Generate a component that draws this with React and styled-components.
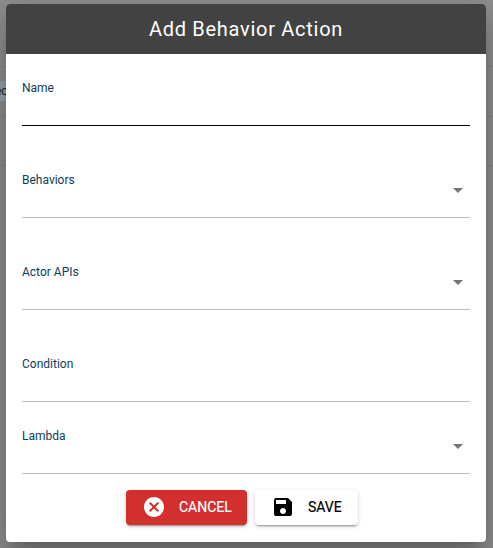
import styled, { createGlobalStyle } from 'styled-components'
import { MdCancel, MdSave, MdArrowDropDown } from 'react-icons/md'

const GlobalStyle = createGlobalStyle`
  html, body {
    margin: 0;
    height: 100%;
    background: #8f8f8f;
    font-family: Roboto, "Liberation Sans", sans-serif;
  }
`

const fields = [
  { label: 'Name', active: true },
  { label: 'Behaviors', select: true },
  { label: 'Actor APIs', select: true },
  { label: 'Condition', short: true },
  { label: 'Lambda', select: true, last: true }
]

export default function App () {
  return (
    <Page>
      <GlobalStyle />
      <BehindTable>
        <BehindRow><Chip>ec</Chip></BehindRow>
        <BehindRow />
        <BehindRow />
      </BehindTable>
      <Dialog>
        <Title>Add Behavior Action</Title>
        <Form>
          {fields.map(f => (
            <Field key={f.label} $short={f.short} $last={f.last}>
              <Label>{f.label}</Label>
              <InputLine $active={f.active}>
                {f.select && <Arrow><MdArrowDropDown /></Arrow>}
              </InputLine>
            </Field>
          ))}
        </Form>
        <Actions>
          <CancelButton type="button">
            <MdCancel />
            <span>Cancel</span>
          </CancelButton>
          <SaveButton type="button">
            <MdSave />
            <span>Save</span>
          </SaveButton>
        </Actions>
      </Dialog>
    </Page>
  )
}

const Page = styled.div`
  position: relative;
  width: 493px;
  height: 548px;
  overflow: hidden;
  background: #8f8f8f;
`

const BehindTable = styled.div`
  padding-top: 66px;
`

const BehindRow = styled.div`
  height: 49.5px;
  border-top: 1px solid #858585;
  box-sizing: border-box;
  display: flex;
  align-items: center;
`

const Chip = styled.div`
  width: 30px;
  height: 20px;
  margin-left: -5px;
  background: #9aa3ad;
  color: #2a2a2a;
  font-size: 12px;
  line-height: 20px;
`

const Dialog = styled.div`
  position: absolute;
  left: 6px;
  top: 4px;
  width: 480px;
  height: 538px;
  background: #fff;
  border-radius: 4px;
  overflow: hidden;
  display: flex;
  flex-direction: column;
  box-shadow: 0 11px 15px -7px rgba(0, 0, 0, 0.2), 0 24px 38px 3px rgba(0, 0, 0, 0.14), 0 9px 46px 8px rgba(0, 0, 0, 0.12);
`

const Title = styled.div`
  height: 50px;
  background: #424242;
  color: #fff;
  font-size: 20px;
  letter-spacing: 0.72px;
  line-height: 50px;
  text-align: center;
`

const Form = styled.div`
  padding: 27px 16px 0;
`

const Field = styled.div`
  height: 45px;
  margin-bottom: ${p => (p.$last ? '0' : p.$short ? '27px' : '47px')};
  display: flex;
  flex-direction: column;
`

const Label = styled.label`
  font-size: 12px;
  line-height: 14px;
  color: #0d3c61;
`

const InputLine = styled.div`
  position: relative;
  flex: 1;
  border-bottom: ${p => (p.$active ? '1px solid #000' : '1px solid #bdbdbd')};
`

const Arrow = styled.span`
  position: absolute;
  right: 0;
  top: -9px;
  color: #757575;
  font-size: 24px;
  line-height: 0;
`

const Actions = styled.div`
  display: flex;
  justify-content: center;
  gap: 8px;
  margin-top: 16px;
  padding-right: 8px;
`

const ActionButton = styled.button`
  height: 35px;
  padding: 0 16px 1px;
  border: 0;
  border-radius: 4px;
  display: flex;
  align-items: center;
  font-family: Roboto, "Liberation Sans", sans-serif;
  font-size: 14px;
  font-weight: 400;
  text-transform: uppercase;
  box-shadow: 0 3px 1px -2px rgba(0, 0, 0, 0.2), 0 2px 2px 0 rgba(0, 0, 0, 0.14), 0 1px 5px 0 rgba(0, 0, 0, 0.12);

  svg {
    font-size: 24px;
    flex: none;
  }

  span {
    -webkit-text-stroke: 0.2px currentColor;
  }
`

const CancelButton = styled(ActionButton)`
  width: 121px;
  background: #d32f2f;
  color: #fff;
  gap: 13px;
`

const SaveButton = styled(ActionButton)`
  width: 103px;
  background: #fff;
  color: #000;
  gap: 13px;
`
